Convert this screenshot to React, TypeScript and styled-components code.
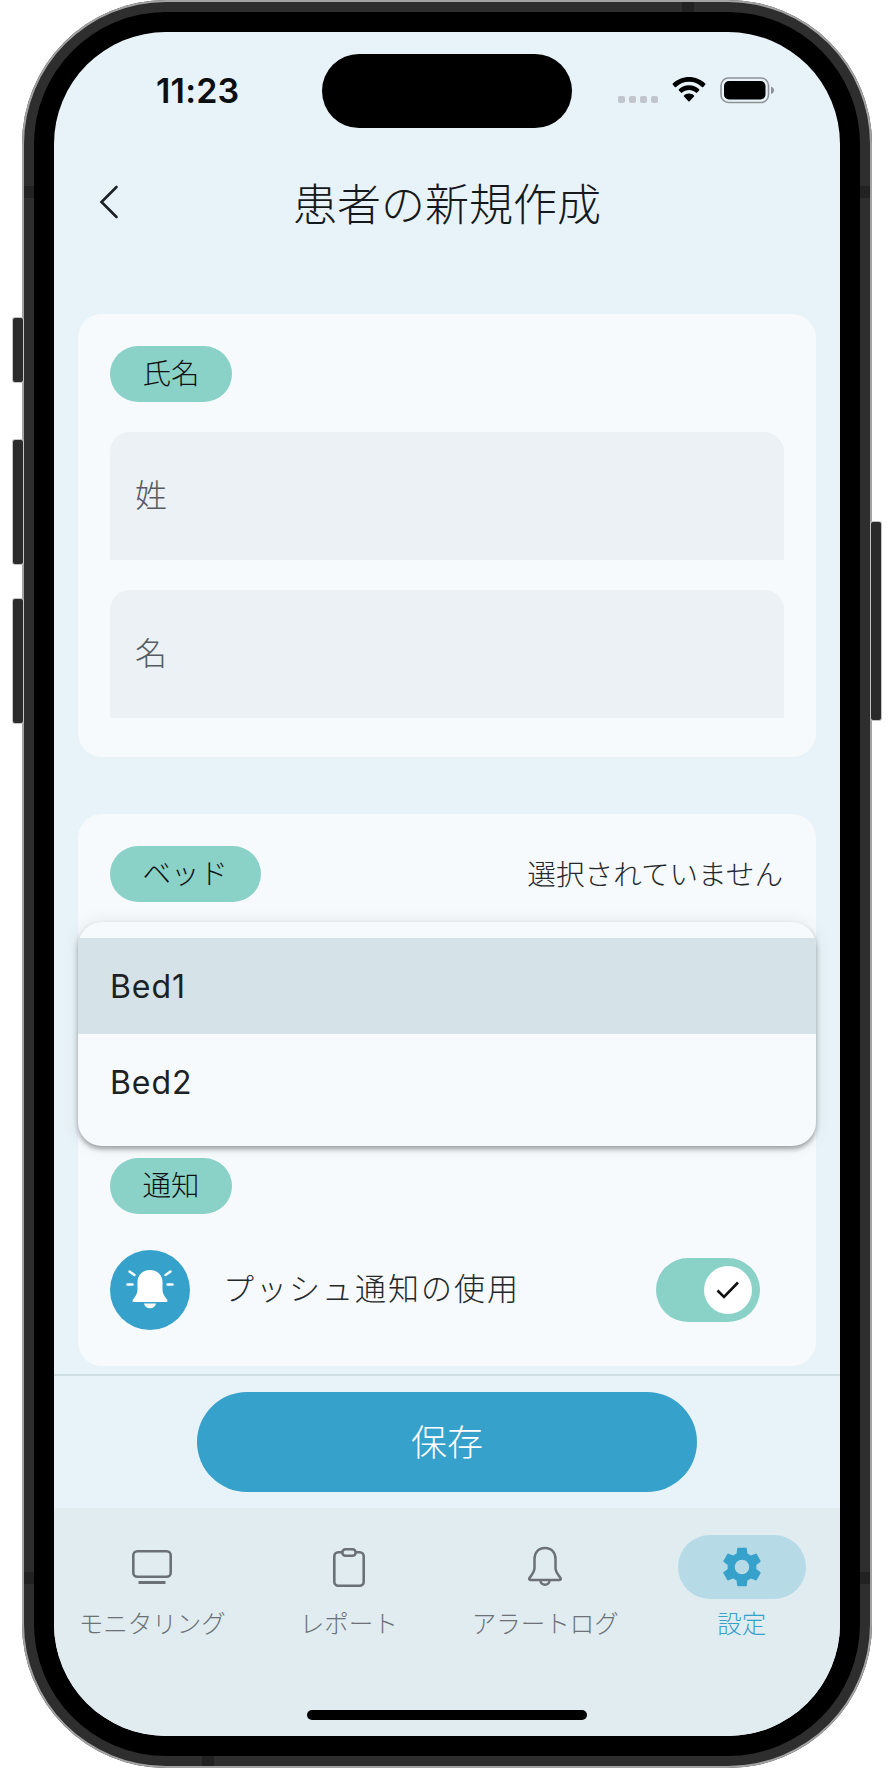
import styled, { createGlobalStyle } from "styled-components";
import { MdSettings } from "react-icons/md";

const GlobalStyle = createGlobalStyle`
  html, body {
    margin: 0;
    background: #fff;
  }
  * {
    box-sizing: border-box;
  }
  body {
    font-family: "Noto Sans CJK JP", "Noto Sans", sans-serif;
    font-weight: 300;
  }
`;

const BackIcon = () => (
  <svg width="20" height="34" viewBox="0 0 20 34" fill="none">
    <path d="M17.5 2 L2.5 17 L17.5 32" stroke="#1c2124" strokeWidth="2.6" strokeLinecap="round" strokeLinejoin="miter" />
  </svg>
);

const WifiIcon = () => (
  <svg width="34" height="25" viewBox="0 0 34 25">
    <path d="M17 0C10.8 0 5.1 2.4.8 6.5c-.4.3-.4.9 0 1.3l2 2.1c.4.4.9.4 1.3 0C7.600 6.600 12.100 4.700 17 4.700s9.400 1.900 12.900 5.200c.4.400.900.400 1.300 0l2-2.100c.4-.400.400-1 0-1.300C28.900 2.400 23.200 0 17 0z" fill="#000" />
    <path d="M17 8.200c-3.900 0-7.400 1.500-10.100 4-.4.300-.4.900 0 1.300l2 2.100c.4.400.9.400 1.300 0 1.800-1.600 4.200-2.600 6.800-2.600s5 1 6.800 2.600c.4.400.9.400 1.300 0l2-2.100c.4-.400.400-1 0-1.300-2.700-2.500-6.200-4-10.100-4z" fill="#000" />
    <path d="M17 16.500c-1.900 0-3.700.7-5 1.900-.4.300-.4.900 0 1.200l4.400 4.700c.3.300.9.300 1.200 0l4.400-4.700c.4-.3.400-.9 0-1.200-1.300-1.200-3.100-1.900-5-1.900z" fill="#000" />
  </svg>
);

const BatteryIcon = () => (
  <svg width="56" height="27" viewBox="0 0 56 27">
    <rect x="1" y="1" width="47.500" height="24.500" rx="7.500" fill="none" stroke="#8d9296" strokeWidth="1.600" />
    <rect x="4" y="4" width="41.500" height="18.500" rx="5" fill="#000" />
    <path d="M51 9.500c2 .7 3 2.100 3 3.800s-1 3.100-3 3.800z" fill="#8d9296" />
  </svg>
);

const AlarmIcon = () => (
  <svg width="48" height="48" viewBox="0 0 48 48" fill="#fff">
    <path d="M24 4c-7.500 0-12.500 5-12.500 12v8c0 4-2.500 7-4.500 9.500-.8 1-.8 2.500 1 2.500h32c1.800 0 1.800-1.500 1-2.500-2-2.500-4.500-5.500-4.500-9.500v-8c0-7-5-12-12.500-12z" />
    <path d="M18 37.500h12c-.6 3-3 4.800-6 4.800s-5.400-1.800-6-4.800z" />
    <g stroke="#fff" strokeWidth="2.400" strokeLinecap="round" fill="none">
      <path d="M3.500 5.500 8.500 9" />
      <path d="M44.500 5.500 39.500 9" />
      <path d="M1.500 18.500H6.500" />
      <path d="M41.500 18.500h5" />
    </g>
  </svg>
);

const CheckIcon = () => (
  <svg width="26" height="22" viewBox="0 0 26 22" fill="none">
    <path d="M2.500 11.500 9 18 23 3.500" stroke="#111" strokeWidth="2.600" />
  </svg>
);

const MonitorIcon = () => (
  <svg width="40" height="34" viewBox="0 0 40 34" fill="none" stroke="#6b7174" strokeWidth="2.600">
    <rect x="1.300" y="1.300" width="37.400" height="25.400" rx="4" />
    <path d="M6.500 32.500h27" strokeWidth="3" />
  </svg>
);

const ClipboardIcon = () => (
  <svg width="32" height="39" viewBox="0 0 32 39" fill="none" stroke="#6b7174" strokeWidth="2.600">
    <rect x="1.300" y="4.300" width="29.400" height="33.400" rx="4" />
    <rect x="9.300" y="1.300" width="13.400" height="6.400" rx="3.200" fill="#e1ecf1" />
  </svg>
);

const BellIcon = () => (
  <svg width="38" height="42" viewBox="0 0 38 42" fill="none" stroke="#6b7174" strokeWidth="2.500" strokeLinejoin="round" strokeLinecap="round">
    <path d="M19 2C12 2 8.500 7 8.500 13v9c0 4-2.500 6.500-5 10-.7 1-.4 2 1 2h29c1.400 0 1.700-1 1-2-2.500-3.500-5-6-5-10v-9C29.500 7 26 2 19 2z" />
    <path d="M14.500 34.500c0 5.500 9 5.500 9 0" />
  </svg>
);

const tabs = [
  { label: "モニタリング", icon: <MonitorIcon /> },
  { label: "レポート", icon: <ClipboardIcon /> },
  { label: "アラートログ", icon: <BellIcon /> },
  { label: "設定", icon: <MdSettings size={48} color="#36a1ca" />, active: true },
];

const App = () => {
  return (
    <>
      <GlobalStyle />
      <Stage>
        <Phone>
          <SideButton $side="left" $top={318} $height={64} />
          <SideButton $side="left" $top={440} $height={124} />
          <SideButton $side="left" $top={599} $height={124} />
          <SideButton $side="right" $top={522} $height={198} />
          <Band $edge="left" $at={186} />
          <Band $edge="right" $at={186} />
          <Band $edge="left" $at={1572} />
          <Band $edge="right" $at={1572} />
          <Band $edge="top" $at={660} />
          <Band $edge="bottom" $at={180} />
          <Bezel>
            <Screen>
              <Island />
              <StatusBar>
                <Clock>11:23</Clock>
                <StatusIcons>
                  <Signal>
                    <i />
                    <i />
                    <i />
                    <i />
                  </Signal>
                  <WifiIcon />
                  <BatteryIcon />
                </StatusIcons>
              </StatusBar>
              <Header>
                <BackButton>
                  <BackIcon />
                </BackButton>
                <Title>患者の新規作成</Title>
              </Header>
              <Content>
                <Card>
                  <Chip>氏名</Chip>
                  <Field>姓</Field>
                  <Field>名</Field>
                </Card>
                <Card $grow>
                  <BedRow>
                    <Chip>ベッド</Chip>
                    <BedValue>選択されていません</BedValue>
                  </BedRow>
                  <Dropdown>
                    <Option $selected>Bed1</Option>
                    <Option>Bed2</Option>
                  </Dropdown>
                  <NoticeBlock>
                    <Chip>通知</Chip>
                    <PushRow>
                      <AlarmBadge>
                        <AlarmIcon />
                      </AlarmBadge>
                      <PushLabel>プッシュ通知の使用</PushLabel>
                      <Toggle>
                        <Thumb>
                          <CheckIcon />
                        </Thumb>
                      </Toggle>
                    </PushRow>
                  </NoticeBlock>
                </Card>
              </Content>
              <Footer>
                <SaveButton>保存</SaveButton>
              </Footer>
              <TabBar>
                {tabs.map((tab) => (
                  <Tab key={tab.label}>
                    <TabIcon $active={tab.active}>{tab.icon}</TabIcon>
                    <TabLabel $active={tab.active}>{tab.label}</TabLabel>
                  </Tab>
                ))}
                <HomeIndicator />
              </TabBar>
            </Screen>
          </Bezel>
        </Phone>
      </Stage>
    </>
  );
};

const Stage = styled.div`
  width: 894px;
  height: 1772px;
  padding: 0 22px 4px 22px;
  background: #fff;
  overflow: hidden;
`;

const Phone = styled.div`
  position: relative;
  height: 1768px;
  padding: 12px;
  background: #2e2e2e;
  border-radius: 144px;
  box-shadow: inset 0 0 0 2px #a3a3a3;
`;

const SideButton = styled.div<{ $side: "left" | "right"; $top: number; $height: number }>`
  position: absolute;
  top: ${(p) => p.$top}px;
  ${(p) => p.$side}: -9px;
  width: 10px;
  height: ${(p) => p.$height}px;
  background: #2b2b2b;
  border-radius: 2px;
  box-shadow: 0 0 0 1px #c4c4c4;
`;

const Band = styled.div<{ $edge: "left" | "right" | "top" | "bottom"; $at: number }>`
  position: absolute;
  background: #222;
  ${(p) =>
    p.$edge === "left" || p.$edge === "right"
      ? `${p.$edge}: 2px; top: ${p.$at}px; width: 10px; height: 12px;`
      : `${p.$edge}: 2px; left: ${p.$at}px; height: 10px; width: 12px;`}
`;

const Bezel = styled.div`
  position: relative;
  height: 100%;
  padding: 20px;
  background: #000;
  border-radius: 132px;
`;

const Screen = styled.div`
  position: relative;
  display: flex;
  flex-direction: column;
  height: 100%;
  background: #e8f3f9;
  border-radius: 112px;
  overflow: hidden;
`;

const Island = styled.div`
  position: absolute;
  top: 22px;
  left: 268px;
  width: 250px;
  height: 74px;
  background: #000;
  border-radius: 37px;
`;

const StatusBar = styled.div`
  display: flex;
  justify-content: space-between;
  align-items: flex-start;
  height: 118px;
  padding: 39px 64px 0 102px;
  flex: none;
`;

const Clock = styled.div`
  font-family: Inter, "Liberation Sans", sans-serif;
  font-size: 34px;
  font-weight: 600;
  letter-spacing: 0.2px;
  line-height: 40px;
  color: #0c0f11;
`;

const StatusIcons = styled.div`
  display: flex;
  align-items: flex-start;
  gap: 14px;
  padding-top: 6px;
`;

const Signal = styled.div`
  display: flex;
  gap: 4px;
  padding-top: 19px;

  i {
    width: 7px;
    height: 7px;
    border-radius: 2px;
    background: #c0c6cc;
  }
`;

const Header = styled.header`
  display: grid;
  grid-template-columns: 1fr auto 1fr;
  align-items: center;
  height: 104px;
  flex: none;
`;

const BackButton = styled.div`
  padding-left: 45px;
  line-height: 0;
`;

const Title = styled.h1`
  margin: 0 0 1px;
  font-size: 44px;
  font-weight: 300;
  line-height: 60px;
  color: #15191b;
`;

const Content = styled.main`
  display: flex;
  flex: 1;
  flex-direction: column;
  gap: 57px;
  padding: 60px 24px 8px;
  min-height: 0;
`;

const Card = styled.section<{ $grow?: boolean }>`
  position: relative;
  display: flex;
  flex-direction: column;
  flex: ${(p) => (p.$grow ? 1 : "none")};
  padding: 32px 32px ${(p) => (p.$grow ? 32 : 39)}px;
  background: #f6fafd;
  border-radius: 24px;
`;

const Chip = styled.div`
  display: inline-flex;
  align-items: center;
  justify-content: center;
  align-self: flex-start;
  height: 56px;
  padding: 0 32.500px 5px;
  background: #8ad1c7;
  border-radius: 28px;
  font-size: 28.500px;
  color: #111;
`;

const Field = styled.div`
  display: flex;
  align-items: center;
  height: 128px;
  margin-top: 30px;
  padding: 0 25px 6px;
  background: #ecf1f5;
  border-radius: 20px 20px 0 0;
  font-size: 32px;
  color: #555b60;
`;

const BedRow = styled.div`
  display: flex;
  justify-content: space-between;
  align-items: center;
`;

const BedValue = styled.div`
  margin: 0 1px 3px 0;
  font-size: 28.600px;
  color: #24282b;
`;

const Dropdown = styled.div`
  position: absolute;
  top: 108px;
  left: 0;
  right: 0;
  height: 224px;
  padding-top: 16px;
  background: #f6fafd;
  border-radius: 24px;
  box-shadow: 0 3px 5px rgba(0, 0, 0, 0.35), 0 0 18px rgba(0, 0, 0, 0.08);
  overflow: hidden;
`;

const Option = styled.div<{ $selected?: boolean }>`
  display: flex;
  align-items: center;
  height: 96px;
  padding: 0 32px;
  background: ${(p) => (p.$selected ? "#d5e2e8" : "transparent")};
  font-family: Inter, "Liberation Sans", sans-serif;
  font-size: 32px;
  font-weight: 400;
  letter-spacing: 0.9px;
  color: #1c2124;
`;

const NoticeBlock = styled.div`
  display: flex;
  flex-direction: column;
  margin-top: 256px;
`;

const PushRow = styled.div`
  display: flex;
  align-items: center;
  margin-top: 36px;
`;

const AlarmBadge = styled.div`
  display: flex;
  align-items: center;
  justify-content: center;
  width: 80px;
  height: 80px;
  background: #36a1ca;
  border-radius: 50%;
`;

const PushLabel = styled.div`
  flex: 1;
  margin: 0 0 8px 33px;
  font-size: 31px;
  letter-spacing: 2px;
  color: #24282b;
`;

const Toggle = styled.div`
  display: flex;
  align-items: center;
  justify-content: flex-end;
  width: 104px;
  height: 64px;
  margin-right: 24px;
  padding-right: 8px;
  background: #8ad1c7;
  border-radius: 32px;
`;

const Thumb = styled.div`
  display: flex;
  align-items: center;
  justify-content: center;
  width: 48px;
  height: 48px;
  background: #fff;
  border-radius: 50%;
`;

const Footer = styled.div`
  display: flex;
  justify-content: center;
  height: 134px;
  padding-top: 16px;
  border-top: 2px solid #cfdde5;
  flex: none;
`;

const SaveButton = styled.button`
  width: 500px;
  height: 100px;
  padding: 0 0 4px;
  border: none;
  border-radius: 50px;
  background: #36a1ca;
  font-family: inherit;
  font-size: 36px;
  font-weight: 300;
  color: #fff;
`;

const TabBar = styled.nav`
  position: relative;
  display: grid;
  grid-template-columns: repeat(4, 1fr);
  height: 228px;
  padding-top: 27px;
  background: #e1ecf1;
  flex: none;
`;

const Tab = styled.div`
  display: flex;
  flex-direction: column;
  align-items: center;
`;

const TabIcon = styled.div<{ $active?: boolean }>`
  display: flex;
  align-items: center;
  justify-content: center;
  width: 128px;
  height: 64px;
  border-radius: 32px;
  background: ${(p) => (p.$active ? "#b7dae7" : "transparent")};
`;

const TabLabel = styled.div<{ $active?: boolean }>`
  margin-top: 7px;
  font-size: 24.500px;
  line-height: 34px;
  white-space: nowrap;
  color: ${(p) => (p.$active ? "#36a1ca" : "#6b7174")};
`;

const HomeIndicator = styled.div`
  position: absolute;
  left: 253px;
  bottom: 16px;
  width: 280px;
  height: 10px;
  border-radius: 5px;
  background: #000;
`;

export default App;
